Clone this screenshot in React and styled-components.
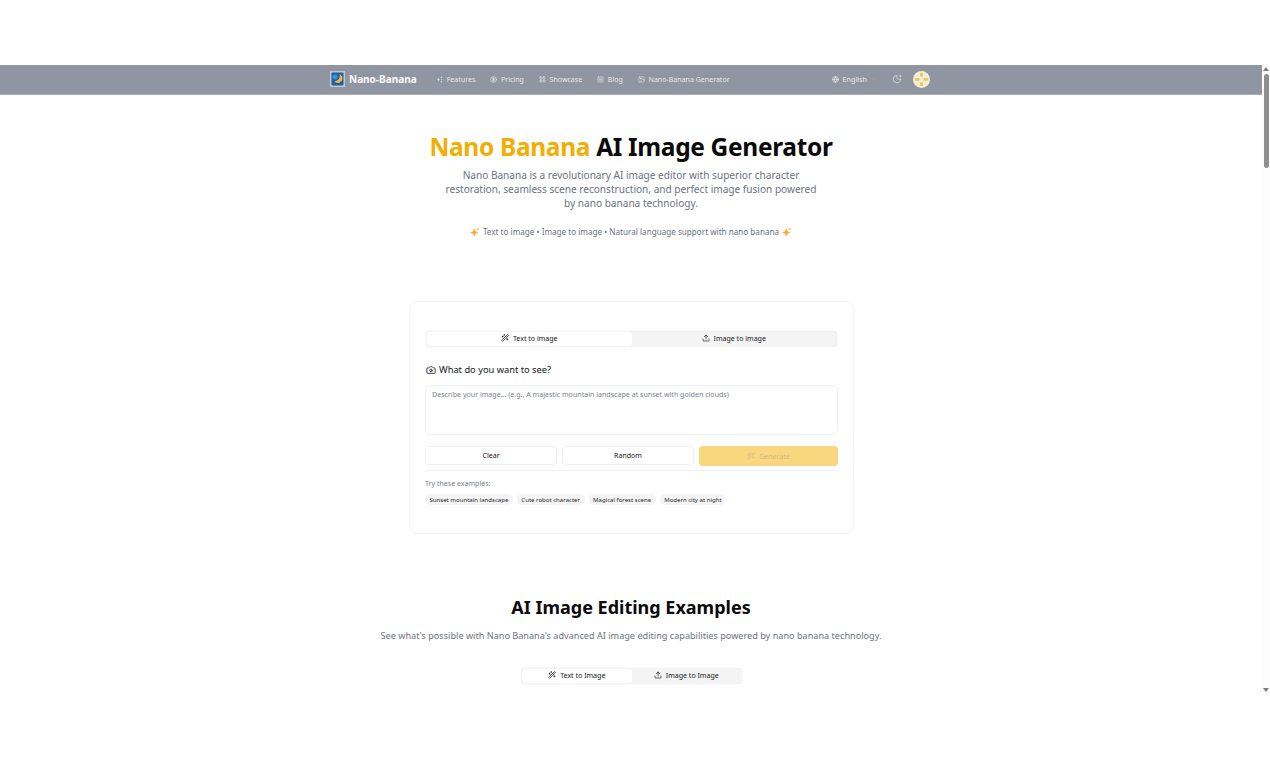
import React from 'react';
import styled, { createGlobalStyle } from 'styled-components';
import {
  Camera,
  ChevronDown,
  CircleDollarSign,
  Globe,
  Image as ImageIcon,
  LayoutGrid,
  MoonStar,
  SquareMenu,
  Upload,
  WandSparkles,
} from 'lucide-react';

const GlobalStyle = createGlobalStyle`
  html, body {
    margin: 0;
    background: #ffffff;
    overflow: hidden;
  }
  * {
    box-sizing: border-box;
  }
  body {
    font-family: "Noto Sans", "Open Sans", "Liberation Sans", sans-serif;
    color: #0a0a0a;
  }
`;

const Stage = styled.div`
  height: 760px;
  padding-top: 65px;
`;

const Viewport = styled.div`
  display: flex;
  height: 630px;
  overflow: hidden;
`;

const Page = styled.div`
  flex: 1;
  min-width: 0;
`;

const Scrollbar = styled.div`
  width: 8px;
  display: flex;
  flex-direction: column;
  align-items: center;
  padding-top: 2px;
  background: #fdfdfd;
`;

const ScrollArrow = styled.div`
  width: 0;
  height: 0;
  border-left: 3px solid transparent;
  border-right: 3px solid transparent;
  border-${(p) => (p.$down ? 'top' : 'bottom')}: 4px solid #7d7d7d;
  margin-top: ${(p) => (p.$down ? 'auto' : '0')};
  margin-bottom: 3px;
`;

const ScrollThumb = styled.div`
  width: 5px;
  height: 94px;
  border-radius: 3px;
  background: #8f8f8f;
`;

const Nav = styled.header`
  height: 30px;
  background: #9096a1;
  border-bottom: 1px solid #a9aeb6;
  display: flex;
  justify-content: center;
`;

const NavInner = styled.div`
  width: 602px;
  padding: 0 2px 1px 0;
  display: flex;
  align-items: center;
`;

const Brand = styled.div`
  display: flex;
  align-items: center;
  gap: 4px;
  margin-right: 19px;
  color: #fbfbfc;
  font-size: 10px;
  font-weight: 700;
`;

const NavLinks = styled.nav`
  display: flex;
  align-items: center;
  gap: 14.7px;
`;

const NavLink = styled.span`
  display: flex;
  align-items: center;
  gap: 4px;
  color: #e6e8eb;
  font-size: 7.05px;
  white-space: nowrap;
`;

const NavRight = styled.div`
  margin-left: auto;
  display: flex;
  align-items: center;
`;

const LangPicker = styled.span`
  display: flex;
  align-items: center;
  gap: 4px;
  color: #e6e8eb;
  font-size: 7.2px;
  margin-right: 15px;
`;

const ThemeToggle = styled.span`
  display: flex;
  color: #e6e8eb;
  margin-right: 11px;
`;

const Hero = styled.section`
  display: flex;
  flex-direction: column;
  align-items: center;
  padding-top: 33px;
`;

const HeroTitle = styled.h1`
  margin: 0;
  font-size: 24.5px;
  line-height: 38px;
  letter-spacing: -0.33px;
  font-weight: 700;
  color: #0a0a0a;
`;

const Accent = styled.span`
  color: #f2ae05;
`;

const HeroText = styled.p`
  margin: 2px 0 0;
  width: 380px;
  text-align: center;
  font-size: 10.08px;
  line-height: 14px;
  color: #6b7280;
`;

const HeroTags = styled.p`
  display: flex;
  align-items: center;
  gap: 3px;
  margin: 15px 0 0;
  font-size: 8.15px;
  line-height: 14px;
  color: #6b7280;
`;

const Card = styled.section`
  width: 445px;
  height: 233px;
  margin: 62px 0 0 409px;
  padding: 29px 15px 0;
  border: 1px solid #f2f3f5;
  border-radius: 8px;
  background: #fff;
`;

const Tabs = styled.div`
  display: grid;
  grid-template-columns: 1fr 1fr;
  width: ${(p) => p.$width};
  height: 16px;
  margin: ${(p) => (p.$inset ? '0 1px' : '0 0 0 1px')};
  padding: 1px;
  border-radius: 4px;
  background: #f4f4f5;
  box-shadow: 0 0 1px rgba(0, 0, 0, 0.2);
`;

const Tab = styled.div`
  display: flex;
  align-items: center;
  justify-content: center;
  gap: 4px;
  padding-bottom: 2px;
  border-radius: 3px;
  font-size: 7.05px;
  color: #18181b;
  background: ${(p) => (p.$active ? '#ffffff' : 'transparent')};
`;

const Label = styled.div`
  display: flex;
  align-items: center;
  gap: 3px;
  margin-top: 16px;
  padding-left: 1px;
  font-size: 9.3px;
  line-height: 14px;
  color: #111827;
`;

const PromptBox = styled.div`
  margin-top: 8px;
  height: 50px;
  padding: 3px 6px;
  border: 1px solid #eeeff1;
  border-radius: 5px;
  font-size: 7.08px;
  line-height: 11px;
  color: #7b8190;
`;

const Actions = styled.div`
  display: grid;
  grid-template-columns: 132px 132px 1fr;
  gap: 5px;
  margin-top: 11px;
`;

const Button = styled.div`
  display: flex;
  align-items: center;
  justify-content: center;
  gap: 4px;
  height: ${(p) => (p.$primary ? '20px' : '19px')};
  padding-bottom: 1px;
  border-radius: 4px;
  border: ${(p) => (p.$primary ? 'none' : '1px solid #eeeff1')};
  background: ${(p) => (p.$primary ? '#f8d77f' : '#fff')};
  color: ${(p) => (p.$primary ? '#d2bc84' : '#18181b')};
  font-size: 7.05px;
`;

const Divider = styled.div`
  height: 1px;
  margin-top: 4px;
  background: #f2f3f5;
`;

const ExamplesLabel = styled.div`
  margin-top: 7px;
  font-size: 7.05px;
  line-height: 10px;
  color: #7b8190;
`;

const Chips = styled.div`
  display: flex;
  gap: 4px;
  margin-top: 6px;
`;

const Chip = styled.span`
  height: 11px;
  padding: 0 4.5px;
  display: flex;
  align-items: center;
  border-radius: 5px;
  background: #f4f4f5;
  font-size: 6.05px;
  color: #27272a;
  white-space: nowrap;
`;

const Examples = styled.section`
  display: flex;
  flex-direction: column;
  align-items: center;
  padding-top: 58px;
`;

const ExamplesTitle = styled.h2`
  margin: 0;
  font-size: 18px;
  line-height: 30px;
  font-weight: 700;
  color: #0a0a0a;
`;

const ExamplesText = styled.p`
  margin: 7px 0 0;
  font-size: 9.14px;
  line-height: 14px;
  color: #6b7280;
`;

const ExampleTabs = styled.div`
  margin-top: 25px;
`;

const Logo = () => (
  <svg width="15" height="16" viewBox="0 0 15 16">
    <rect width="15" height="16" fill="#c3c7cd" />
    <rect x="1.500" y="1.500" width="12" height="13" rx="1" fill="#1f5fa6" />
    <circle cx="5" cy="6" r="2.500" fill="#3f93d6" />
    <path d="M9.500 3c1.200 3.400-1 6.600-5.200 7.600 2.400 2.400 7 1.400 8-1.800C13 6.300 11.600 3.900 9.500 3z" fill="#eeb63a" />
  </svg>
);

const Avatar = () => (
  <svg width="17" height="17" viewBox="0 0 17 17">
    <circle cx="8.500" cy="8.500" r="8.500" fill="#f4ecd4" />
    <rect x="2" y="7" width="4.500" height="2.800" fill="#eec95e" />
    <rect x="10.500" y="7" width="4.500" height="2.800" fill="#eec95e" />
    <rect x="7" y="2" width="3" height="3.500" fill="#eec95e" />
    <rect x="7" y="11.500" width="3" height="3.500" fill="#eec95e" />
  </svg>
);

// four dots around a spark, the Features glyph in the nav
const FeaturesIcon = () => (
  <svg width="7" height="7" viewBox="0 0 7 7" fill="currentColor">
    <path d="M2.500 1.800l.5 1.200 1.200.5-1.200.5-.5 1.200-.5-1.200-1.200-.5 1.200-.5z" />
    <circle cx="5.600" cy="1.200" r=".7" />
    <circle cx="5.900" cy="3.500" r=".5" />
    <circle cx="5.400" cy="5.800" r=".7" />
  </svg>
);

const SparkleEmoji = () => (
  <svg width="10" height="10" viewBox="0 0 10 10" fill="#f8ab3c">
    <path d="M4.300 1.200l1.300 3 3 1.300-3 1.300-1.300 3-1.300-3-3-1.300 3-1.300z" />
    <path d="M8 0l.6 1.400 1.400.6-1.400.6L8 4l-.6-1.400L6 2l1.400-.6z" fill="#f9c266" />
  </svg>
);

const navItems = [
  { label: 'Features', icon: <FeaturesIcon /> },
  { label: 'Pricing', icon: <CircleDollarSign size={7} strokeWidth={2} /> },
  { label: 'Showcase', icon: <LayoutGrid size={7} strokeWidth={2} /> },
  { label: 'Blog', icon: <SquareMenu size={7} strokeWidth={1.8} /> },
  { label: 'Nano-Banana Generator', icon: <ImageIcon size={7} strokeWidth={1.8} /> },
];

const chips = [
  'Sunset mountain landscape',
  'Cute robot character',
  'Magical forest scene',
  'Modern city at night',
];

export default function App() {
  return (
    <>
      <GlobalStyle />
      <Stage>
        <Viewport>
          <Page>
            <Nav>
              <NavInner>
                <Brand>
                  <Logo />
                  Nano-Banana
                </Brand>
                <NavLinks>
                  {navItems.map((item) => (
                    <NavLink key={item.label}>
                      {item.icon}
                      {item.label}
                    </NavLink>
                  ))}
                </NavLinks>
                <NavRight>
                  <LangPicker>
                    <Globe size={7} strokeWidth={2.4} />
                    English
                    <ChevronDown size={6} strokeWidth={1.5} color="#a8adb5" />
                  </LangPicker>
                  <ThemeToggle>
                    <MoonStar size={10} strokeWidth={1.6} />
                  </ThemeToggle>
                  <Avatar />
                </NavRight>
              </NavInner>
            </Nav>

            <Hero>
              <HeroTitle>
                <Accent>Nano Banana</Accent> AI Image Generator
              </HeroTitle>
              <HeroText>
                Nano Banana is a revolutionary AI image editor with superior character restoration,
                seamless scene reconstruction, and perfect image fusion powered by nano banana
                technology.
              </HeroText>
              <HeroTags>
                <SparkleEmoji />
                Text to image • Image to image • Natural language support with nano banana
                <SparkleEmoji />
              </HeroTags>
            </Hero>

            <Card>
              <Tabs $width="calc(100% - 2px)" $inset>
                <Tab $active>
                  <WandSparkles size={8} strokeWidth={2} />
                  Text to image
                </Tab>
                <Tab>
                  <Upload size={8} strokeWidth={2} />
                  Image to image
                </Tab>
              </Tabs>
              <Label>
                <Camera size={10} strokeWidth={2} />
                What do you want to see?
              </Label>
              <PromptBox>Describe your image... (e.g., A majestic mountain landscape at sunset with golden clouds)</PromptBox>
              <Actions>
                <Button>Clear</Button>
                <Button>Random</Button>
                <Button $primary>
                  <WandSparkles size={8} strokeWidth={2} />
                  Generate
                </Button>
              </Actions>
              <Divider />
              <ExamplesLabel>Try these examples:</ExamplesLabel>
              <Chips>
                {chips.map((chip) => (
                  <Chip key={chip}>{chip}</Chip>
                ))}
              </Chips>
            </Card>

            <Examples>
              <ExamplesTitle>AI Image Editing Examples</ExamplesTitle>
              <ExamplesText>
                See what's possible with Nano Banana's advanced AI image editing capabilities powered by nano banana technology.
              </ExamplesText>
              <ExampleTabs>
                <Tabs $width="221px">
                  <Tab $active>
                    <WandSparkles size={8} strokeWidth={2} />
                    Text to Image
                  </Tab>
                  <Tab>
                    <Upload size={8} strokeWidth={2} />
                    Image to Image
                  </Tab>
                </Tabs>
              </ExampleTabs>
            </Examples>
          </Page>
          <Scrollbar>
            <ScrollArrow />
            <ScrollThumb />
            <ScrollArrow $down />
          </Scrollbar>
        </Viewport>
      </Stage>
    </>
  );
}
